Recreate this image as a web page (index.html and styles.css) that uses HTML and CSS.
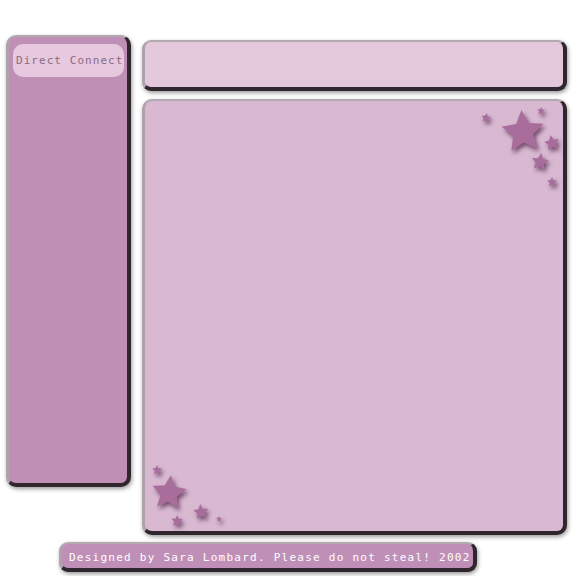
FILE: index.html
```html
<!DOCTYPE html>
<html>
<head>
<meta charset="utf-8">
<link rel="stylesheet" href="styles.css">
</head>
<body>
<div class="page">
  <div class="layout">
    <aside class="sidebar">
      <div class="pill">Direct Connect</div>
    </aside>
    <div class="right">
      <div class="topbar"></div>
      <main class="panel">
        <svg class="stars stars-tr" width="100" height="100" viewBox="0 0 100 100">
          <defs>
            <polygon id="star" points="0,-1 0.282,-0.388 0.951,-0.309 0.456,0.148 0.588,0.809 0,0.48 -0.588,0.809 -0.456,0.148 -0.951,-0.309 -0.282,-0.388"/>
          </defs>
          <use href="#star" transform="translate(60,31) rotate(-4) scale(22)"/>
          <use href="#star" transform="translate(23,17) rotate(10) scale(5)"/>
          <use href="#star" transform="translate(78,10) rotate(5) scale(4)"/>
          <use href="#star" transform="translate(89,42) rotate(-10) scale(8)"/>
          <use href="#star" transform="translate(77,61) rotate(8) scale(9)"/>
          <use href="#star" transform="translate(89,81) rotate(0) scale(5)"/>
        </svg>
        <svg class="stars stars-bl" width="100" height="80" viewBox="0 0 100 80">
          <defs>
            <polygon id="star2" points="0,-1 0.282,-0.388 0.951,-0.309 0.456,0.148 0.588,0.809 0,0.48 -0.588,0.809 -0.456,0.148 -0.951,-0.309 -0.282,-0.388"/>
          </defs>
          <use href="#star2" transform="translate(24,42) rotate(6) scale(18)"/>
          <use href="#star2" transform="translate(12,19) rotate(0) scale(5)"/>
          <use href="#star2" transform="translate(56,61) rotate(-6) scale(8)"/>
          <use href="#star2" transform="translate(32,70) rotate(4) scale(6)"/>
          <use href="#star2" transform="translate(74,68) rotate(0) scale(3)"/>
        </svg>
      </main>
    </div>
  </div>
  <footer class="footer">Designed by Sara Lombard. Please do not steal! 2002</footer>
</div>
</body>
</html>
```

FILE: styles.css
```css
html, body {
  margin: 0;
  padding: 0;
  background: #ffffff;
}

.page {
  width: 576px;
  height: 576px;
  box-sizing: border-box;
  padding: 35px 0 0 6px;
  overflow: hidden;
}

.layout {
  display: flex;
  gap: 11px;
  align-items: flex-start;
}

.sidebar,
.topbar,
.panel,
.footer {
  box-sizing: border-box;
  border-style: solid;
  border-width: 2px 4px 4px 3px;
  border-color: #b3a9b0 #2f272d #2f272d #aea3ab;
  box-shadow: 1px 2px 4px rgba(0, 0, 0, 0.4);
}

.sidebar {
  width: 125px;
  height: 452px;
  background: #bf8fb5;
  border-radius: 10px;
  padding: 7px 3px 0 4px;
}

.pill {
  height: 33px;
  background: #e6c8df;
  border-radius: 10px;
  font-family: "DejaVu Sans Mono", "Liberation Mono", monospace;
  font-size: 11px;
  letter-spacing: 1.05px;
  color: #8b6b83;
  line-height: 33px;
  padding-left: 3px;
  white-space: nowrap;
}

.right {
  width: 425px;
  margin-top: 5px;
  display: flex;
  flex-direction: column;
  gap: 8px;
}

.topbar {
  height: 51px;
  background: #e3c8dc;
  border-radius: 9px;
}

.panel {
  position: relative;
  height: 436px;
  background: #d9b8d2;
  border-radius: 10px;
  overflow: hidden;
}

.stars {
  position: absolute;
  fill: #a96d9c;
  filter: drop-shadow(2px 3px 2px rgba(60, 20, 50, 0.65));
}

.stars-tr {
  top: 0;
  right: 0;
}

.stars-bl {
  left: 0;
  bottom: 0;
}

.footer {
  width: 418px;
  height: 30px;
  margin: 7px 0 0 53px;
  background: #c08fb7;
  border-radius: 9px;
  font-family: "DejaVu Sans Mono", "Liberation Mono", monospace;
  font-size: 11px;
  letter-spacing: 1.25px;
  color: #ffffff;
  line-height: 27px;
  padding-left: 7px;
  white-space: nowrap;
}
```
